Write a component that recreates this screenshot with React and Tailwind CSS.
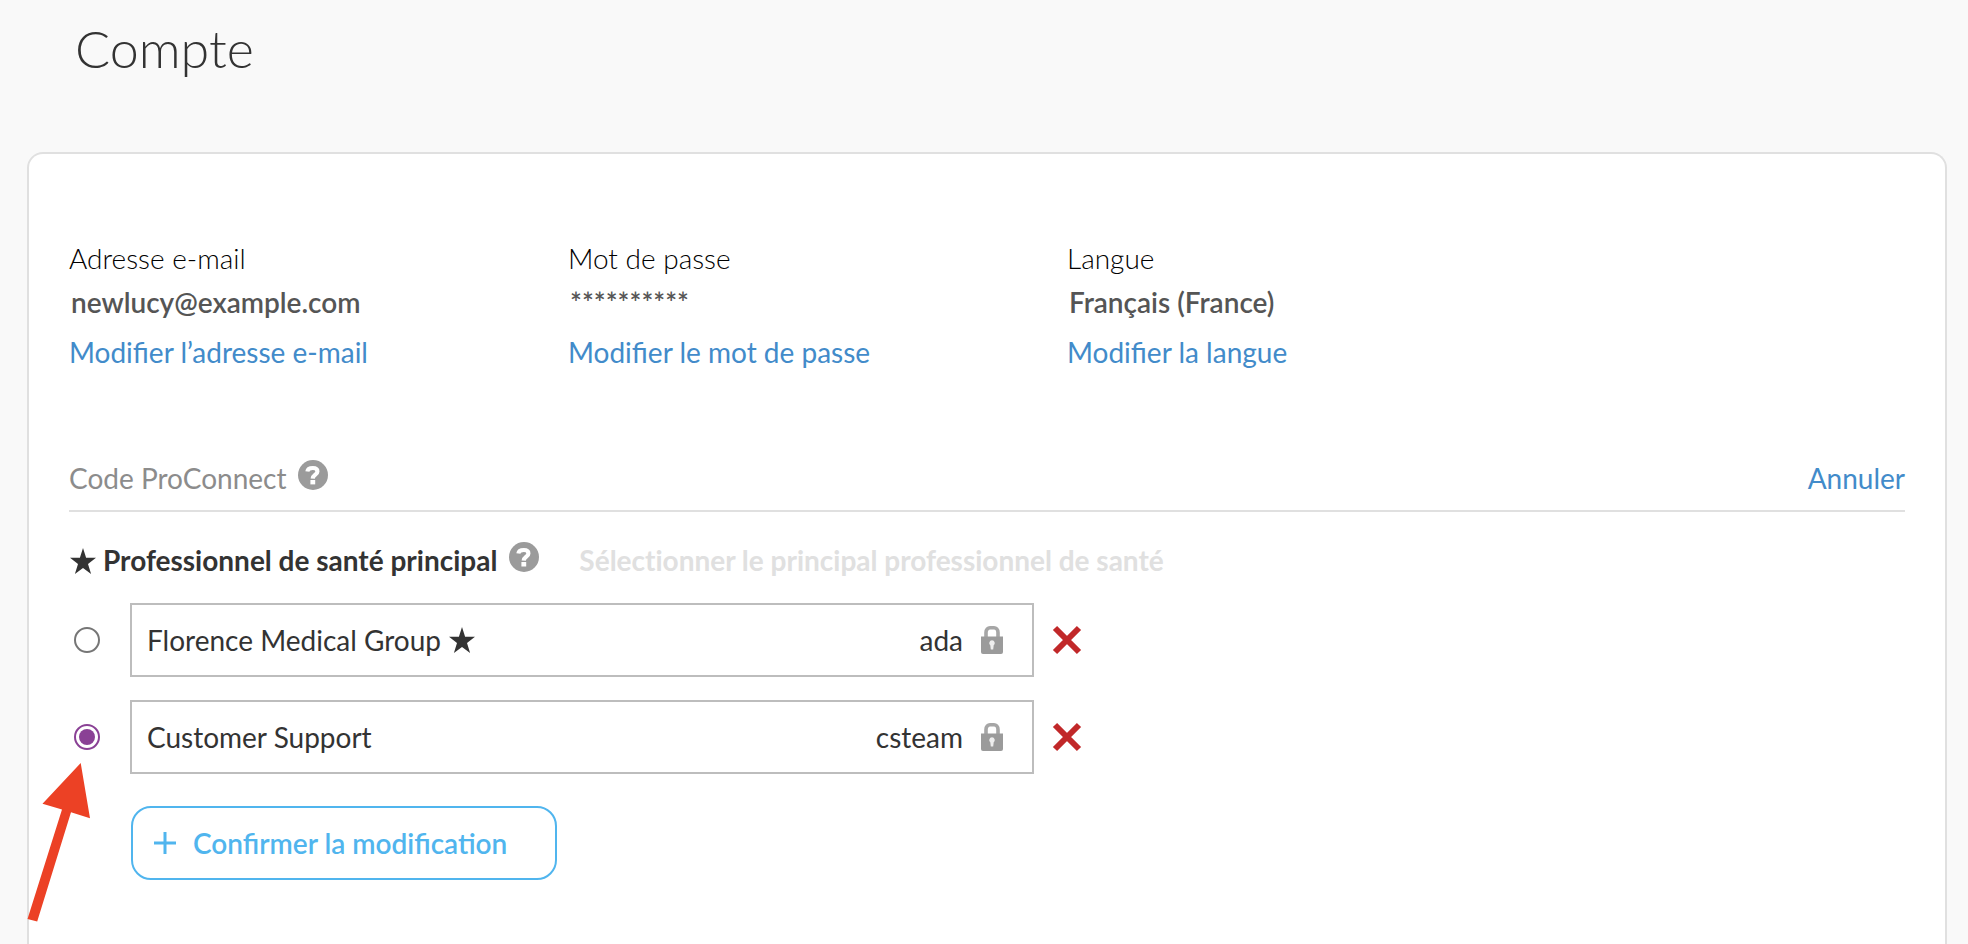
import { useState } from 'react'

const settings = [
  { label: 'Adresse e-mail', value: 'newlucy@example.com', action: 'Modifier l’adresse e-mail' },
  { label: 'Mot de passe', value: '**********', action: 'Modifier le mot de passe' },
  { label: 'Langue', value: 'Français (France)', action: 'Modifier la langue' },
]

const providers = [
  { id: 'ada', name: 'Florence Medical Group', primary: true },
  { id: 'csteam', name: 'Customer Support', primary: false },
]

export default function App() {
  const [selected, setSelected] = useState('csteam')

  return (
    <div className="relative flex min-h-screen flex-col bg-[#f9f9f9] font-['Lato',sans-serif] text-[28px] leading-9 text-[#333]">
      <header className="px-[75px] pt-4 pb-[72px]">
        <h1 className="text-[52px] leading-[64px] font-light">Compte</h1>
      </header>

      <main className="mr-[21px] ml-[27px] flex-1 rounded-t-2xl border-2 border-b-0 border-[#e0e0e0] bg-white px-10 pt-[86px] pb-16">
        <section className="flex">
          {settings.map(s => (
            <div key={s.label} className="w-[499px]">
              <div className="font-light text-black">{s.label}</div>
              <div className="mt-2 pl-[2px] font-semibold text-[#555]">{s.value}</div>
              <a href="#" className="mt-[14px] block text-[#428bca]">{s.action}</a>
            </div>
          ))}
        </section>

        <section className="mt-[90px]">
          <div className="flex items-center justify-between border-b-2 border-[#e0e0e0] pb-[14px]">
            <h2 className="flex gap-[11px] text-[#8c8c8c]">
              Code ProConnect
              <HelpButton />
            </h2>
            <a href="#" className="text-[#428bca]">Annuler</a>
          </div>

          <div className="mt-[30px] flex font-bold">
            <h3 className="flex">
              <span className="mt-[6px] ml-px"><Star /></span>
              <span className="mr-3 ml-[7px] [font-variant-ligatures:none]">Professionnel de santé principal</span>
              <HelpButton />
            </h3>
            <span className="ml-10 text-[#e0e0e0] [font-variant-ligatures:none]">Sélectionner le principal professionnel de santé</span>
          </div>

          <div className="mt-[25px] flex flex-col gap-[23px]">
            {providers.map(p => (
              <ProviderRow key={p.id} provider={p} checked={selected === p.id} onSelect={() => setSelected(p.id)} />
            ))}
          </div>

          <button className="mt-8 ml-[62px] flex h-[74px] items-center rounded-[20px] border-2 border-[#50b5ee] pr-12 pl-[21px] font-semibold text-[#50b5ee]">
            <svg className="mr-[17px] h-[22px] w-[22px]" viewBox="0 0 22 22" aria-hidden="true">
              <path d="M11 0v22M0 11h22" stroke="currentColor" strokeWidth="3" />
            </svg>
            Confirmer la modification
          </button>
        </section>
      </main>

      <Arrow />
    </div>
  )
}

function ProviderRow({ provider, checked, onSelect }) {
  const inputId = `provider-${provider.id}`
  return (
    <div className="flex items-center">
      <input
        id={inputId}
        type="radio"
        name="provider"
        checked={checked}
        onChange={onSelect}
        className="ml-[5px] h-[26px] w-[26px] shrink-0 appearance-none rounded-full border-2 border-[#767676] bg-white bg-clip-content p-[3px] checked:border-[#8a4195] checked:bg-[#8a4195]"
      />
      <label
        htmlFor={inputId}
        className="ml-[30px] flex h-[74px] w-[904px] items-center border-2 border-[#bdbdbd] pr-[29px] pl-[15px]"
      >
        <span>{provider.name}</span>
        {provider.primary && <span className="ml-2"><Star /></span>}
        <span className="ml-auto">{provider.id}</span>
        <Lock />
      </label>
      <button className="ml-[18px]" aria-label="Supprimer">
        <svg className="h-[30px] w-[30px]" viewBox="0 0 30 30">
          <path d="M3 3l24 24M27 3L3 27" stroke="#c12829" strokeWidth="6" />
        </svg>
      </button>
    </div>
  )
}

function HelpButton() {
  return (
    <button className="h-[30px] w-[30px] shrink-0 rounded-full" aria-label="Aide">
      <svg className="h-[30px] w-[30px]" viewBox="0 0 30 30">
        <circle cx="15" cy="15" r="15" fill="#9b9b9b" />
        <path d="M9.4 11.6C9.700 9 11.800 8 14.800 8c3 0 4.600 1.300 4.600 3.400 0 3.200-4.500 3.200-4.700 7.200" fill="none" stroke="#fff" strokeWidth="4.200" />
        <path d="M12.400 20h4.800v4.400h-4.800z" fill="#fff" />
      </svg>
    </button>
  )
}

function Star() {
  return (
    <svg className="h-[26px] w-[26px] shrink-0" viewBox="0 0 26 26" aria-hidden="true">
      <path d="M13 0l3.100 9.800H26l-8 6.100L21.100 26 13 19.900 4.900 26 8 15.900 0 9.800h9.900z" fill="#333" />
    </svg>
  )
}

function Lock() {
  return (
    <svg className="ml-[18px] h-7 w-[22px]" viewBox="0 0 22 28" aria-hidden="true">
      <path d="M5 12V6.500C5 3.500 7 1.800 9 1.800h4c2 0 4 1.700 4 4.700V12" fill="none" stroke="#a6a6a6" strokeWidth="3.600" />
      <path d="M0 10.500h22V26q0 2-2 2H2q-2 0-2-2z" fill="#9b9b9b" />
      <path d="M11 14.300a2.800 2.800 0 0 1 1.700 5l-.5 4.200H9.800l-.5-4.200a2.800 2.800 0 0 1 1.700-5z" fill="#eee" />
    </svg>
  )
}

// Pointer that draws attention to the selected provider
function Arrow() {
  return (
    <svg className="pointer-events-none absolute top-[763px] left-[27px] h-[160px] w-[64px]" viewBox="0 0 64 160" aria-hidden="true">
      <path d="M53.700 0L63 55.200 44 49.200 10.200 158.500 0.500 156 35 46.600 15.500 40.800z" fill="#ec4125" />
    </svg>
  )
}
